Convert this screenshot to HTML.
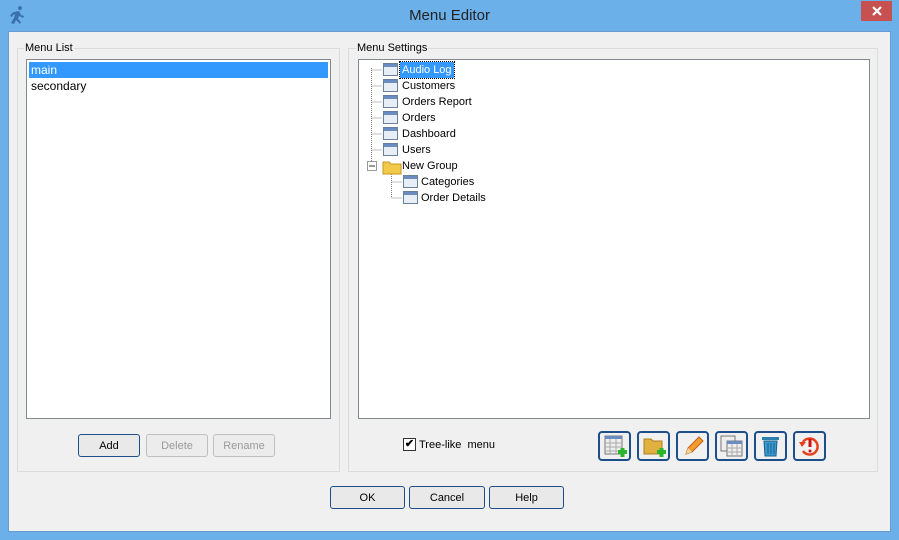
<!DOCTYPE html>
<html><head><style>
*{margin:0;padding:0;box-sizing:border-box}
body{width:899px;height:540px;background:#6cb0ea;font-family:"Liberation Sans",sans-serif;font-size:11px;position:relative;overflow:hidden;color:#000}
.a{position:absolute}
.title{left:0;top:0;width:899px;height:31px;text-align:center;font-size:15px;line-height:31px;color:#222}
.close{left:861px;top:1px;width:31px;height:20px;background:#c75050;color:#fff;text-align:center;font-size:13px;line-height:20px}
.client{left:8px;top:31px;width:883px;height:501px;background:#f0f0f0;border:1px solid #6a9bd0}
.grp{border:1px solid #dcdcdc}
.lbl{background:#f0f0f0;padding:0 1px;font-size:11px;color:#000}
.box{background:#fff;border:1px solid #828790}
.btn{border:1px solid #adadad;border-radius:3px;background:#e9e9e9;text-align:center;line-height:23px;font-size:11px}
.btn.def{border-color:#1c4f8a;box-shadow:inset 0 0 0 1px #e9e9e9}
.btn.dis{color:#9a9a9a;border-color:#bfbfbf;background:#ececec}
.tb{width:33px;height:30px;border:2px solid #1c4f8a;border-radius:4px;background:#f0f0f0}
.ti{font-size:11px;line-height:16px}
.ic{display:inline-block;width:15px;height:13px;border:1px solid #6a7f9a;background:linear-gradient(#6b8cc0 0 3px,#e8eef5 3px);position:absolute}
</style></head><body>
<div class="a title">Menu Editor</div>
<svg class="a" style="left:7px;top:6px" width="20" height="20" viewBox="0 0 20 20"><path d="M11 2a2 2 0 1 1 0 .1zM7 6l5-1 2 4 3 1-1 2-4-2-1 3 3 3-1 2-4-4-2 4-3-1 3-5 1-4-2 1-1 2-2-1 2-3z" fill="#3a6fb0"/></svg>
<div class="a close"><svg width="12" height="12" style="margin-top:4px"><path d="M2 2L10 10M10 2L2 10" stroke="#fff" stroke-width="2.2"/></svg></div>
<div class="a client"></div>

<div class="a grp" style="left:17px;top:48px;width:323px;height:424px"></div>
<div class="a lbl" style="left:24px;top:42px">Menu List</div>
<div class="a box" style="left:26px;top:59px;width:305px;height:360px">
 <div style="margin:2px 2px 0;height:16px;background:#3399ff;color:#fff;font-size:12px;line-height:16px;padding-left:2px">main</div>
 <div style="margin:0 2px;height:16px;font-size:12px;line-height:16px;padding-left:2px">secondary</div>
</div>
<div class="a btn def" style="left:78px;top:434px;width:62px;height:23px">Add</div>
<div class="a btn dis" style="left:146px;top:434px;width:62px;height:23px">Delete</div>
<div class="a btn dis" style="left:213px;top:434px;width:62px;height:23px">Rename</div>

<div class="a grp" style="left:348px;top:48px;width:530px;height:424px"></div>
<div class="a lbl" style="left:356px;top:42px">Menu Settings</div>
<div class="a box" style="left:358px;top:59px;width:512px;height:360px"></div>
<svg class="a" style="left:358px;top:60px" width="140" height="150">
 <g stroke="#808080" stroke-dasharray="1 1" fill="none">
  <path d="M13.5 8V106M13.5 10H24M13.5 26H24M13.5 42H24M13.5 58H24M13.5 74H24M13.5 90H24M33.5 112V138M33.5 122H44M33.5 138H44"/>
 </g>
 <rect x="9.5" y="101.5" width="9" height="9" fill="#fff" stroke="#999"/><path d="M11 106H17" stroke="#333"/>
 <path d="M25 102h6l2 2h10v10H25z" fill="#f3c94a" stroke="#c8961e"/>
</svg>
<div class="ic" style="left:383px;top:63px"></div>
<div class="ic" style="left:383px;top:79px"></div>
<div class="ic" style="left:383px;top:95px"></div>
<div class="ic" style="left:383px;top:111px"></div>
<div class="ic" style="left:383px;top:127px"></div>
<div class="ic" style="left:383px;top:143px"></div>
<div class="ic" style="left:403px;top:175px"></div>
<div class="ic" style="left:403px;top:191px"></div>
<div class="a ti" style="left:400px;top:62px;background:#3399ff;color:#fff;padding:0 2px;outline:1px dotted #000">Audio Log</div>
<div class="a ti" style="left:402px;top:78px">Customers</div>
<div class="a ti" style="left:402px;top:94px">Orders Report</div>
<div class="a ti" style="left:402px;top:110px">Orders</div>
<div class="a ti" style="left:402px;top:126px">Dashboard</div>
<div class="a ti" style="left:402px;top:142px">Users</div>
<div class="a ti" style="left:402px;top:158px">New Group</div>
<div class="a ti" style="left:421px;top:174px">Categories</div>
<div class="a ti" style="left:421px;top:190px">Order Details</div>

<div class="a" style="left:403px;top:438px;width:13px;height:13px;border:1px solid #333;background:#fff;font-size:11px;line-height:11px;text-align:center;font-weight:bold">✔</div>
<div class="a" style="left:419px;top:439px">Tree-like&nbsp; menu</div>

<div class="a tb" style="left:598px;top:431px"><svg width="29" height="26"><rect x="5" y="3" width="17" height="18" fill="#eee" stroke="#777"/><rect x="5" y="3" width="17" height="3" fill="#6b8cc0"/><path d="M5 10h17M5 14h17M5 18h17M10 6v15M16 6v15" stroke="#aaa"/><path d="M18 19h9M22.5 15v9" stroke="#2bb52b" stroke-width="4"/></svg></div>
<div class="a tb" style="left:637px;top:431px"><svg width="29" height="26"><path d="M5 6h7l2 2h9v13H5z" fill="#e0b040" stroke="#b08020"/><path d="M18 19h9M22.5 15v9" stroke="#2bb52b" stroke-width="4"/></svg></div>
<div class="a tb" style="left:676px;top:431px"><svg width="29" height="26"><path d="M8 21l2-6 11-11 4 4-11 11z" fill="#f39c30" stroke="#c06010"/><path d="M8 21l2-6 4 4z" fill="#f5d8a0"/></svg></div>
<div class="a tb" style="left:715px;top:431px"><svg width="29" height="26"><rect x="4" y="3" width="14" height="15" fill="#eee" stroke="#777"/><rect x="10" y="8" width="15" height="15" fill="#eee" stroke="#777"/><rect x="10" y="8" width="15" height="3" fill="#6b8cc0"/><path d="M10 15h15M10 19h15M15 11v12M20 11v12" stroke="#aaa"/></svg></div>
<div class="a tb" style="left:754px;top:431px"><svg width="29" height="26"><rect x="6" y="4" width="17" height="3" fill="#2a7fb0"/><path d="M8 8h13l-1 15H9z" fill="#3a9ad0" stroke="#1a5f8a"/><path d="M12 10v11M15 10v11M18 10v11" stroke="#1a5f8a"/></svg></div>
<div class="a tb" style="left:793px;top:431px"><svg width="29" height="26"><path d="M8 9a8 8 0 1 1 0 9" fill="none" stroke="#e8401a" stroke-width="2.5"/><path d="M4 9h7l-4 5z" fill="#e8401a"/><path d="M15 6v8" stroke="#d01010" stroke-width="3"/><circle cx="15" cy="18" r="1.5" fill="#d01010"/></svg></div>

<div class="a btn def" style="left:330px;top:486px;width:75px;height:23px">OK</div>
<div class="a btn def" style="left:409px;top:486px;width:76px;height:23px">Cancel</div>
<div class="a btn def" style="left:489px;top:486px;width:75px;height:23px">Help</div>
</body></html>
